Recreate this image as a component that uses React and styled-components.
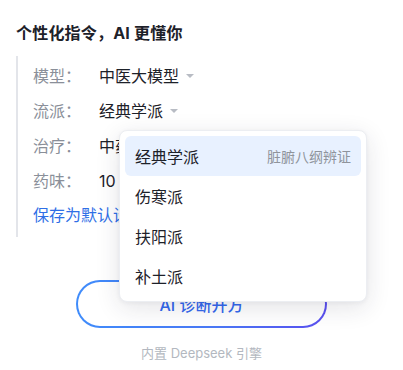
import React from "react";
import styled, { createGlobalStyle } from "styled-components";

const Global = createGlobalStyle`
  html, body { margin: 0; padding: 0; background: #ffffff; }
  body {
    font-family: "Inter", "Noto Sans CJK SC", sans-serif;
    -webkit-font-smoothing: antialiased;
  }
`;

const Page = styled.div`
  width: 403px;
  height: 370px;
  box-sizing: border-box;
  padding: 20px 16px 0 16px;
  display: flex;
  flex-direction: column;
  overflow: hidden;
`;

const Title = styled.div`
  font-size: 16px;
  font-weight: 700;
  color: #1d2129;
  line-height: 24px;
  letter-spacing: 0.2px;
  margin-top: 1px;
`;

const Form = styled.div`
  position: relative;
  margin-top: 11px;
  border-left: 2px solid #e3e5ea;
  padding: 1px 0 6px 15px;
  display: flex;
  flex-direction: column;
`;

const Row = styled.div`
  display: flex;
  align-items: center;
  height: 35px;
  font-size: 16px;
`;

const Label = styled.span`
  width: 66px;
  color: #8a8f99;
`;

const Value = styled.span`
  color: #1d2129;
  display: inline-flex;
  align-items: center;
  gap: 7px;
`;

const Caret = styled.span`
  width: 0;
  height: 0;
  border-left: 4px solid transparent;
  border-right: 4px solid transparent;
  border-top: 4px solid #b8bcc4;
  margin-top: 2px;
`;

const Link = styled.div`
  color: #2f6fe6;
  font-size: 16px;
  height: 34px;
  display: flex;
  align-items: center;
`;

const Menu = styled.div`
  position: absolute;
  left: 101px;
  top: 74px;
  width: 236px;
  padding: 5px;
  background: #fff;
  border: 1px solid #eceef2;
  border-radius: 8px;
  box-shadow: 0 6px 24px rgba(30, 35, 60, 0.12), 0 1px 4px rgba(30, 35, 60, 0.05);
  display: flex;
  flex-direction: column;
  z-index: 5;
`;

const Item = styled.div`
  height: 40px;
  flex: none;
  display: flex;
  align-items: center;
  justify-content: space-between;
  padding: 0 10px;
  border-radius: 6px;
  font-size: 16px;
  color: #1d2129;
  background: ${(p) => (p.$active ? "#e8f1ff" : "transparent")};
`;

const Hint = styled.span`
  font-size: 14px;
  color: #8f949c;
`;

const Bottom = styled.div`
  display: flex;
  flex-direction: column;
  align-items: center;
  margin-top: 43px;
`;

const Button = styled.div`
  width: 251px;
  height: 48px;
  box-sizing: border-box;
  border-radius: 24px;
  border: 2px solid transparent;
  background:
    linear-gradient(#fff, #fff) padding-box,
    linear-gradient(90deg, #3f8cfb 0%, #4a78f5 55%, #5a4ff0 100%) border-box;
  display: flex;
  align-items: center;
  justify-content: center;
  color: #3468ee;
  font-size: 16px;
  font-weight: 500;
`;

const Caption = styled.div`
  margin-top: 15px;
  font-size: 13px;
  color: #b3b8c0;
`;

export default function App() {
  return (
    <>
      <Global />
      <Page>
        <Title>个性化指令，AI 更懂你</Title>
        <Form>
          <Row>
            <Label>模型：</Label>
            <Value>
              中医大模型<Caret />
            </Value>
          </Row>
          <Row>
            <Label>流派：</Label>
            <Value>
              经典学派<Caret />
            </Value>
          </Row>
          <Row>
            <Label>治疗：</Label>
            <Value>
              中药汤剂<Caret />
            </Value>
          </Row>
          <Row>
            <Label>药味：</Label>
            <Value>
              10 味<Caret />
            </Value>
          </Row>
          <Link>保存为默认设置</Link>
          <Menu>
            <Item $active>
              经典学派<Hint>脏腑八纲辨证</Hint>
            </Item>
            <Item>伤寒派</Item>
            <Item>扶阳派</Item>
            <Item>补土派</Item>
          </Menu>
        </Form>
        <Bottom>
          <Button>AI 诊断开方</Button>
          <Caption>内置 Deepseek 引擎</Caption>
        </Bottom>
      </Page>
    </>
  );
}
